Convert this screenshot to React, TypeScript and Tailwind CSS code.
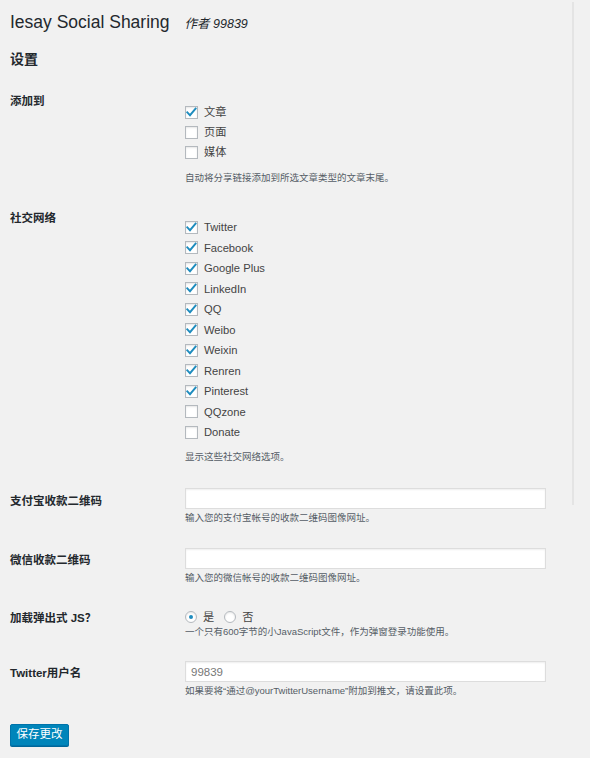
import React from "react";

function CheckBox({ checked }: { checked: boolean }) {
  return (
    <span className="relative inline-flex w-[13px] h-[13px] shrink-0 items-center justify-center border border-[#b4b9be] bg-white shadow-[inset_0_1px_2px_rgba(0,0,0,0.1)]">
      {checked && (
        <svg width="13" height="13" viewBox="0 0 13 13" className="overflow-visible">
          <path d="M2.3 6.3 L5 9.2 L10.6 2.6" fill="none" stroke="#1e8cbe" strokeWidth="1.9" strokeLinecap="square" />
        </svg>
      )}
    </span>
  );
}

function CheckItem({ label, checked, h }: { label: string; checked: boolean; h: string }) {
  return (
    <div className={`flex items-center ${h}`}>
      <CheckBox checked={checked} />
      <span className="ml-[6px] text-[11.2px] leading-[14px] text-[#444]">{label}</span>
    </div>
  );
}

function Desc({ children, mt }: { children: React.ReactNode; mt: string }) {
  return <p className={`${mt} text-[9.5px] leading-[16px] text-[#555d66]`}>{children}</p>;
}

function TextInput({ value }: { value?: string }) {
  return (
    <input
      readOnly
      value={value ?? ""}
      className="block w-[361px] h-[21px] border border-[#dddddd] bg-white shadow-[inset_0_1px_2px_rgba(0,0,0,0.07)] px-[5px] text-[11.5px] text-[#777] outline-none"
    />
  );
}

function Label({ children, pt }: { children: React.ReactNode; pt: string }) {
  return (
    <div className={`w-[175px] shrink-0 ${pt} text-[11.5px] leading-[18px] font-bold text-[#23282d]`}>{children}</div>
  );
}

export default function App() {
  const pages = [
    { label: "文章", checked: true },
    { label: "页面", checked: false },
    { label: "媒体", checked: false },
  ];
  const socials = [
    { label: "Twitter", checked: true },
    { label: "Facebook", checked: true },
    { label: "Google Plus", checked: true },
    { label: "LinkedIn", checked: true },
    { label: "QQ", checked: true },
    { label: "Weibo", checked: true },
    { label: "Weixin", checked: true },
    { label: "Renren", checked: true },
    { label: "Pinterest", checked: true },
    { label: "QQzone", checked: false },
    { label: "Donate", checked: false },
  ];

  return (
    <div className="flex w-full min-h-[758px] bg-[#f1f1f1] font-['Liberation_Sans','Noto_Sans_CJK_SC',sans-serif] text-[#444]">
      <div className="w-[562px] shrink-0 pl-[10px]">
        <div className="flex items-baseline pt-[10px]">
          <h1 className="text-[17.5px] leading-[24px] font-normal text-[#23282d]">Iesay Social Sharing</h1>
          <span className="ml-[15px] text-[12.5px] italic text-[#23282d]">作者 99839</span>
        </div>
        <h2 className="mt-[15px] text-[14px] leading-[20px] font-bold text-[#23282d]">设置</h2>

        {/* 添加到 */}
        <div className="flex mt-[22px]">
          <Label pt="pt-[1px]">添加到</Label>
          <div className="pt-[11px]">
            {pages.map((p) => (
              <CheckItem key={p.label} label={p.label} checked={p.checked} h="h-[20px]" />
            ))}
            <Desc mt="mt-[8px]">自动将分享链接添加到所选文章类型的文章末尾。</Desc>
          </div>
        </div>

        {/* 社交网络 */}
        <div className="flex mt-[23px]">
          <Label pt="pt-0">社交网络</Label>
          <div className="pt-[8px]">
            {socials.map((p) => (
              <CheckItem key={p.label} label={p.label} checked={p.checked} h="h-[20.5px]" />
            ))}
            <Desc mt="mt-[6.5px]">显示这些社交网络选项。</Desc>
          </div>
        </div>

        {/* 支付宝 */}
        <div className="flex mt-[23px]">
          <Label pt="pt-[4px]">支付宝收款二维码</Label>
          <div>
            <TextInput />
            <Desc mt="mt-[1px]">输入您的支付宝帐号的收款二维码图像网址。</Desc>
          </div>
        </div>

        {/* 微信 */}
        <div className="flex mt-[22px]">
          <Label pt="pt-[3px]">微信收款二维码</Label>
          <div>
            <TextInput />
            <Desc mt="mt-[1px]">输入您的微信帐号的收款二维码图像网址。</Desc>
          </div>
        </div>

        {/* 加载弹出式 JS */}
        <div className="flex mt-[21px]">
          <Label pt="pt-[2px]">加载弹出式 JS？</Label>
          <div>
            <div className="flex items-center h-[16px] mt-[2px]">
              <span className="inline-flex w-[12px] h-[12px] items-center justify-center rounded-full border border-[#b4b9be] bg-white shadow-[inset_0_1px_2px_rgba(0,0,0,0.1)]">
                <span className="w-[4px] h-[4px] rounded-full bg-[#1e8cbe]" />
              </span>
              <span className="ml-[6px] text-[11.2px] leading-[14px] text-[#444]">是</span>
              <span className="ml-[10px] inline-flex w-[12px] h-[12px] rounded-full border border-[#b4b9be] bg-white shadow-[inset_0_1px_2px_rgba(0,0,0,0.1)]" />
              <span className="ml-[6px] text-[11.2px] leading-[14px] text-[#444]">否</span>
            </div>
            <Desc mt="-mt-[1px]">一个只有600字节的小JavaScript文件，作为弹窗登录功能使用。</Desc>
          </div>
        </div>

        {/* Twitter用户名 */}
        <div className="flex mt-[21px]">
          <Label pt="pt-[3px]">Twitter用户名</Label>
          <div>
            <TextInput value="99839" />
            <Desc mt="mt-[1px]">如果要将“通过@yourTwitterUsername”附加到推文，请设置此项。</Desc>
          </div>
        </div>

        <button className="mt-[25px] flex h-[22px] w-[59px] items-center justify-center rounded-[2px] border border-[#0073aa] bg-[#0085ba] text-[11.5px] text-white shadow-[0_1px_0_#006799]">
          保存更改
        </button>
      </div>
      <div className="ml-[10px] mt-[2px] h-[503px] w-[2px] bg-[#e4e4e4]" />
    </div>
  );
}
